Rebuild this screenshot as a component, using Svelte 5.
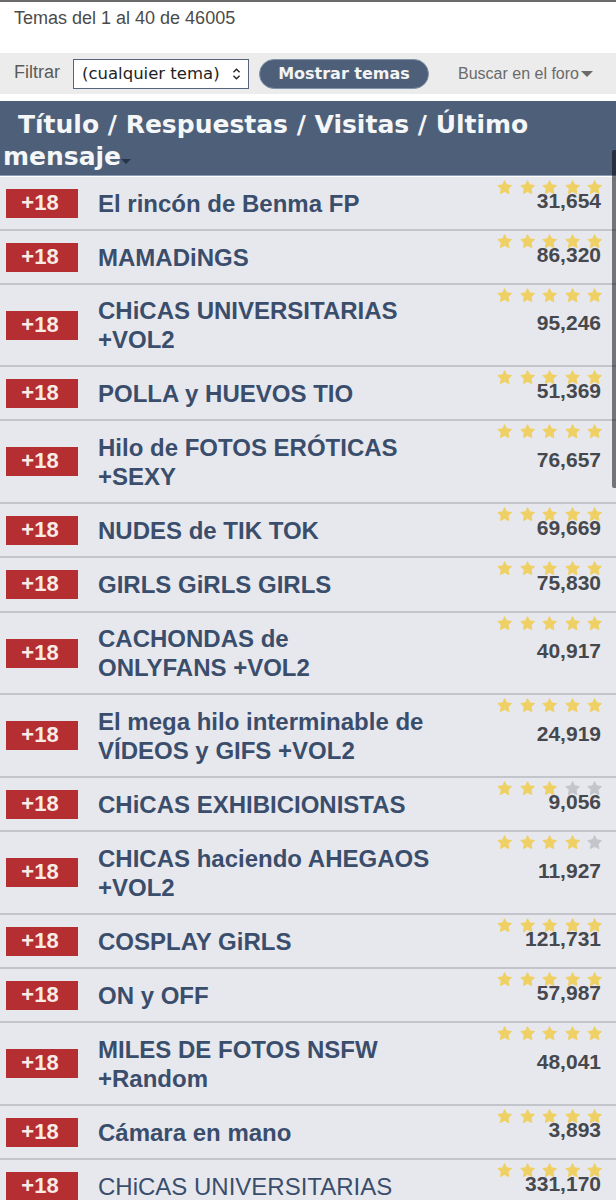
<script lang="ts">
	const threads = [
		{ title: 'El rincón de Benma FP', views: '31,654', stars: 5, height: 54 },
		{ title: 'MAMADiNGS', views: '86,320', stars: 5, height: 54 },
		{ title: 'CHiCAS UNIVERSITARIAS\n+VOL2', views: '95,246', stars: 5, height: 82 },
		{ title: 'POLLA y HUEVOS TIO', views: '51,369', stars: 5, height: 54 },
		{ title: 'Hilo de FOTOS ERÓTICAS\n+SEXY', views: '76,657', stars: 5, height: 83 },
		{ title: 'NUDES de TIK TOK', views: '69,669', stars: 5, height: 54 },
		{ title: 'GIRLS GiRLS GIRLS', views: '75,830', stars: 5, height: 55 },
		{ title: 'CACHONDAS de\nONLYFANS +VOL2', views: '40,917', stars: 5, height: 82 },
		{ title: 'El mega hilo interminable de\nVÍDEOS y GIFS +VOL2', views: '24,919', stars: 5, height: 83 },
		{ title: 'CHiCAS EXHIBICIONISTAS', views: '9,056', stars: 3, height: 54 },
		{ title: 'CHICAS haciendo AHEGAOS\n+VOL2', views: '11,927', stars: 4, height: 83 },
		{ title: 'COSPLAY GiRLS', views: '121,731', stars: 5, height: 54 },
		{ title: 'ON y OFF', views: '57,987', stars: 5, height: 54 },
		{ title: 'MILES DE FOTOS NSFW\n+Random', views: '48,041', stars: 5, height: 83 },
		{ title: 'Cámara en mano', views: '3,893', stars: 5, height: 54 },
		{ title: 'CHiCAS UNIVERSITARIAS', views: '331,170', stars: 5, height: 54 }
	];
</script>

<div class="page">
	<div class="top-line"></div>
	<div class="count">Temas del 1 al 40 de 46005</div>

	<div class="filter-bar">
		<span class="filter-label">Filtrar</span>
		<div class="select">
			<span>(cualquier tema)</span>
			<svg viewBox="0 0 10 16" width="9" height="14" fill="none">
				<path d="M1.5 6 5 2.5 8.5 6M1.500 10 5 13.500 8.500 10" stroke="#222" stroke-width="1.500" />
			</svg>
		</div>
		<button class="show">Mostrar temas</button>
		<span class="search">Buscar en el foro<i class="caret grey"></i></span>
	</div>

	<div class="table-head">
		<div class="head-text">Título / Respuestas / Visitas / Último mensaje<i class="caret dark"></i></div>
	</div>

	{#each threads as thread}
		<div class="row" style="height: {thread.height}px">
			<span class="badge">+18</span>
			<a class="title" class:plain={thread.views === '331,170'}>{thread.title}</a>
			<div class="stats">
				<div class="stars">
					{#each [1, 2, 3, 4, 5] as n}
						<svg viewBox="0 0 24 24" width="15" height="15">
							<path d="M12 1l3.500 6.700 7.800 1.100-5.600 5.300 1.400 7.700L12 18.300l-6.600 3.500 1.400-7.700-5.600-5.300 7.800-1.100z" fill={n <= thread.stars ? '#efd064' : '#c3c5ca'} stroke={n <= thread.stars ? '#efd064' : '#c3c5ca'} stroke-width="1.500" stroke-linejoin="round" />
						</svg>
					{/each}
				</div>
				<div class="views">{thread.views}</div>
			</div>
		</div>
	{/each}

	<div class="scrollbar"></div>
</div>

<style>
	:global(body) {
		margin: 0;
		background: #fff;
	}

	.page {
		position: relative;
		width: 616px;
		height: 1200px;
		overflow: hidden;
		font-family: 'Liberation Sans', Arial, sans-serif;
	}

	.top-line {
		height: 2px;
		background: #6b6b6b;
	}

	.count {
		height: 51px;
		padding: 7px 0 0 14px;
		box-sizing: border-box;
		font-size: 18px;
		line-height: 19px;
		color: #4b4b4b;
	}

	.filter-bar {
		display: flex;
		align-items: center;
		height: 41px;
		margin-bottom: 7px;
		padding-left: 14px;
		box-sizing: border-box;
		background: #ececec;
	}

	.filter-label {
		width: 59px;
		flex: none;
		margin-top: -3px;
		font-size: 18px;
		color: #5a5a5a;
	}

	.select {
		display: flex;
		align-items: center;
		justify-content: space-between;
		width: 176px;
		height: 30px;
		flex: none;
		padding: 0 7px 0 8px;
		box-sizing: border-box;
		background: #fff;
		border: 1px solid #56657c;
		font-family: 'DejaVu Sans', sans-serif;
		font-size: 16.500px;
		white-space: nowrap;
		color: #222;
	}

	.show {
		width: 170px;
		height: 30px;
		flex: none;
		margin-left: 10px;
		padding: 0;
		border: 1px solid #8092a8;
		border-radius: 15px;
		background: #4e6079;
		color: #f4f4f4;
		font-family: 'DejaVu Sans', sans-serif;
		font-weight: 700;
		font-size: 16px;
	}

	.search {
		margin-left: 29px;
		font-size: 16px;
		color: #6a6a6a;
		white-space: nowrap;
	}

	.caret {
		display: inline-block;
		width: 0;
		height: 0;
		border-left: 5px solid transparent;
		border-right: 5px solid transparent;
		vertical-align: middle;
	}

	.caret.grey {
		margin-left: 2px;
		border-left-width: 6px;
		border-right-width: 6px;
		border-top: 6px solid #6a6a6a;
	}

	.caret.dark {
		border-top: 5px solid #26344a;
		margin-top: 6px;
	}

	.table-head {
		height: 75px;
		margin-bottom: 1px;
		padding: 8px 0 0 3px;
		box-sizing: border-box;
		background: #4e6079;
		border-bottom: 1px solid #8d9bb0;
		color: #f4f6f8;
		font-family: 'DejaVu Sans', sans-serif;
		font-weight: 700;
		font-size: 25px;
		line-height: 32px;
	}

	.head-text {
		width: 570px;
		text-indent: 15px;
	}

	.row {
		position: relative;
		display: flex;
		align-items: center;
		box-sizing: border-box;
		background: #e7e8ee;
		border-bottom: 2px solid #c3c5ca;
		padding-left: 6px;
	}

	.badge {
		flex: none;
		width: 72px;
		height: 29px;
		padding-right: 4px;
		box-sizing: border-box;
		background: #b52e32;
		color: #f8ebe6;
		font-weight: 700;
		font-size: 22px;
		line-height: 28px;
		text-align: center;
	}

	.title {
		width: 350px;
		margin-left: 20px;
		font-weight: 700;
		font-size: 24px;
		line-height: 29px;
		white-space: pre-line;
		color: #3a4e6c;
	}

	.title.plain {
		font-weight: 400;
	}

	.stats {
		position: absolute;
		top: 0;
		bottom: 0;
		right: 15px;
		display: flex;
		flex-direction: column;
		align-items: flex-end;
		justify-content: center;
	}

	.stars {
		position: absolute;
		top: 3px;
		right: -1px;
		display: flex;
		gap: 7.500px;
	}

	.views {
		position: relative;
		margin-top: -4px;
		font-weight: 700;
		font-size: 21px;
		line-height: 24px;
		color: #46484d;
	}

	.scrollbar {
		position: absolute;
		top: 150px;
		right: 0;
		width: 4px;
		height: 338px;
		border-radius: 2px 0 0 2px;
		background: rgba(0, 0, 0, 0.5);
	}
</style>
